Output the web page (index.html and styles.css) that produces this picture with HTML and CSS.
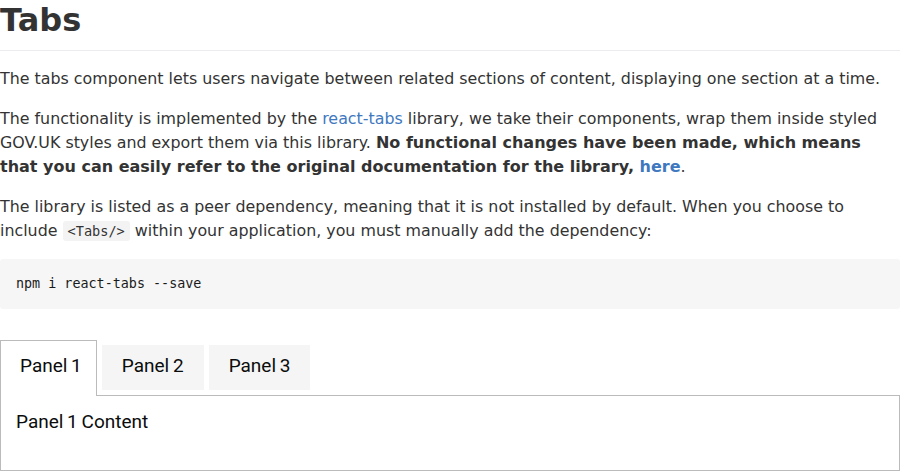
FILE: index.html
```html
<!DOCTYPE html>
<html lang="en">
<head>
<meta charset="utf-8">
<title>Tabs</title>
<link rel="stylesheet" href="styles.css">
</head>
<body>
<main class="doc">
  <h1 class="title">Tabs</h1>
  <p>The tabs component lets users navigate between related sections of content, displaying one section at a time.</p>
  <p>The functionality is implemented by the <a href="#">react-tabs</a> library, we take their components, wrap them inside styled GOV.UK styles and export them via this library. <strong>No functional changes have been made, which means that you can easily refer to the original documentation for the library, <a href="#">here</a></strong>.</p>
  <p>The library is listed as a peer dependency, meaning that it is not installed by default. When you choose to include <code class="inline">&lt;Tabs/&gt;</code> within your application, you must manually add the dependency:</p>
  <pre class="block"><code>npm i react-tabs --save</code></pre>
  <div class="tabs">
    <ul class="tab-list">
      <li class="tab tab-selected">Panel 1</li>
      <li class="tab">Panel 2</li>
      <li class="tab">Panel 3</li>
    </ul>
    <div class="tab-panel">Panel 1 Content</div>
  </div>
</main>
</body>
</html>
```

FILE: styles.css
```css
html, body {
  margin: 0;
  padding: 0;
  background: #ffffff;
}

.doc {
  width: 900px;
  font-family: "DejaVu Sans", sans-serif;
  font-size: 15.86px;
  line-height: 24px;
  color: #333333;
}

.title {
  margin: 0 0 16px;
  padding-bottom: 9.6px;
  font-size: 32px;
  line-height: 40px;
  font-weight: bold;
  border-bottom: 1px solid #eaecef;
}

.doc p {
  margin: 0 0 16px;
}

.doc strong {
  font-size: 16px;
}

.doc a {
  color: #4078c0;
  text-decoration: none;
}

.inline {
  font-family: "DejaVu Sans Mono", monospace;
  font-size: 13.6px;
  padding: 2px 5px;
  background: #f3f3f3;
  border-radius: 3px;
}

.block {
  margin: 0 0 16px;
  padding: 16px;
  background: #f6f6f6;
  border-radius: 3px;
  font-family: "DejaVu Sans Mono", monospace;
  font-size: 13.4px;
  line-height: 18px;
  color: #1a1a1a;
}

.tabs {
  margin-top: 36px;
  font-family: Roboto, "Liberation Sans", sans-serif;
  font-size: 19px;
  line-height: 25px;
  color: #0b0c0c;
}

.tab-list {
  display: flex;
  align-items: flex-start;
  margin: 0;
  padding: 0;
  list-style: none;
  border-bottom: 1px solid #bbbbbb;
}

.tab {
  margin-right: 5px;
  padding: 8px 20px 12px;
  background: #f5f5f5;
  word-spacing: -1px;
}

.tab-selected {
  margin-top: -5px;
  margin-bottom: -1px;
  padding: 12px 14px 18px 19px;
  background: #ffffff;
  border: 1px solid #bbbbbb;
  border-bottom: 0;
}

.tab-panel {
  padding: 13px 15px 36px;
  border: 1px solid #bbbbbb;
  border-top: 0;
  word-spacing: -1px;
}
```
